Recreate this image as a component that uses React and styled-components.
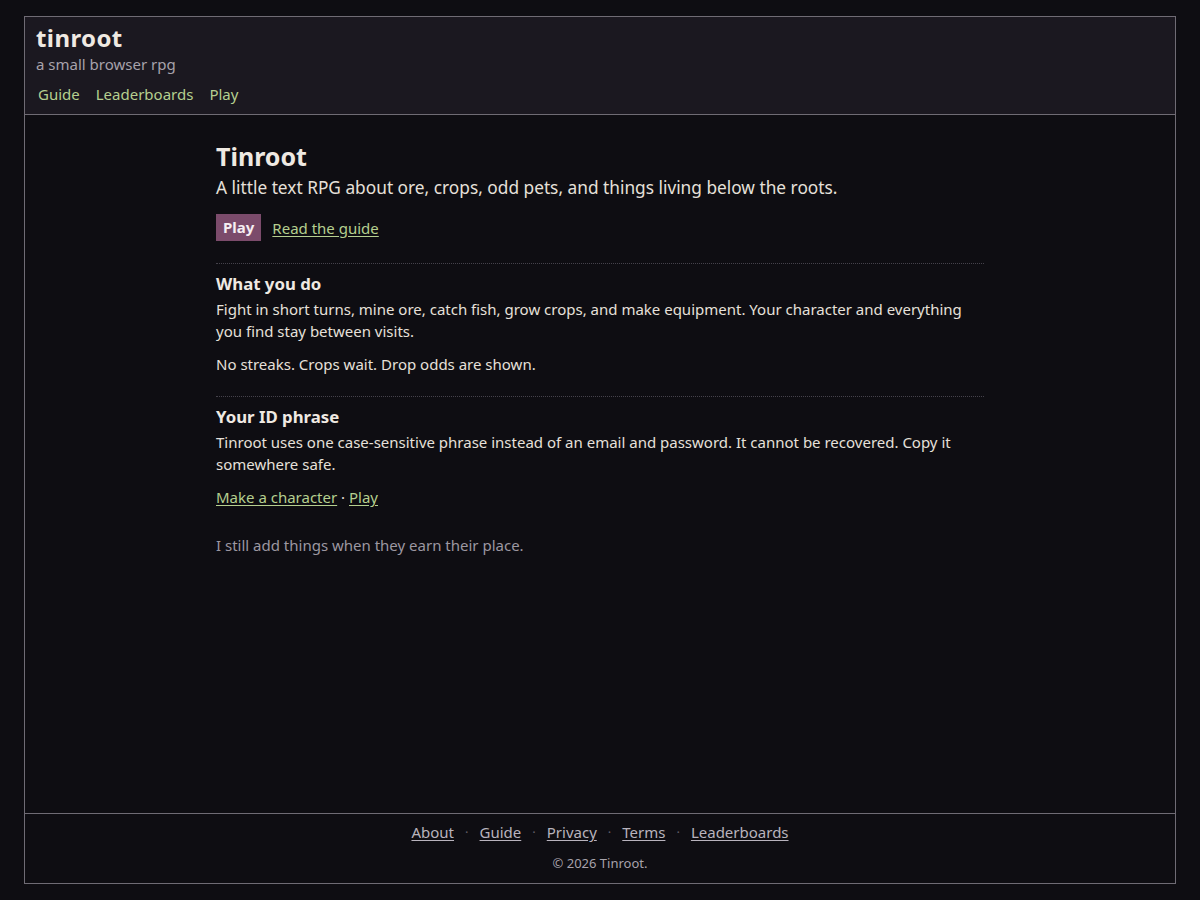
import React from 'react';
import styled, { createGlobalStyle } from 'styled-components';

const GlobalStyle = createGlobalStyle`
  html, body {
    margin: 0;
    padding: 0;
    background: #0e0d12;
    color: #ece6e0;
    font-family: "Noto Sans", "Open Sans", sans-serif;
  }
  body {
    padding: 16px 24px;
  }
  * { box-sizing: border-box; }
`;

const Frame = styled.div`
  display: flex;
  flex-direction: column;
  min-height: calc(100vh - 32px);
  border: 1px solid #6f6b74;
`;

const Header = styled.header`
  background: #1b1820;
  border-bottom: 1px solid #6f6b74;
  padding: 8px 11px 10px;
`;

const SiteTitle = styled.div`
  font-size: 24px;
  font-weight: 700;
  line-height: 26px;
  color: #efe9e2;
  letter-spacing: 0.4px;
`;

const Tagline = styled.div`
  margin-top: 3px;
  font-size: 15px;
  line-height: 20px;
  color: #a7a2ab;
`;

const Nav = styled.nav`
  display: flex;
  gap: 12px;
  margin-top: 10px;
  line-height: 20px;
`;

const NavLink = styled.a`
  padding: 0 2px;
  font-size: 15px;
  color: #b5cf8f;
  text-decoration: none;
`;

const Main = styled.main`
  flex: 1;
  width: 768px;
  margin: 0 auto;
  padding-top: 26px;
`;

const Title = styled.h1`
  margin: 0;
  font-size: 25px;
  line-height: 30px;
  font-weight: 700;
  color: #efe9e2;
`;

const Lead = styled.p`
  margin: 4px 0 0;
  font-size: 17.3px;
  line-height: 26px;
  color: #e6e0da;
`;

const Actions = styled.div`
  display: flex;
  align-items: center;
  gap: 11px;
  margin-top: 13px;
`;

const Button = styled.a`
  display: inline-block;
  padding: 4px 7px;
  font-size: 15px;
  line-height: 19px;
  font-weight: 700;
  background: #7b4b6b;
  color: #f5eef2;
  text-decoration: none;
`;

const TextLink = styled.a`
  font-size: 15px;
  color: #b5cf8f;
  text-decoration: underline;
  text-underline-offset: 2px;
`;

const Section = styled.section`
  margin-top: ${(p) => p.$gap || 22}px;
  padding-top: 8px;
  border-top: 1px dotted #45424b;
`;

const Heading = styled.h2`
  margin: 1px 0 0;
  font-size: 16.8px;
  line-height: 22px;
  font-weight: 700;
  color: #efe9e2;
`;

const Para = styled.p`
  margin: ${(p) => (p.$first ? 3 : 11)}px 0 0;
  font-size: 15px;
  line-height: 22px;
  color: #e6e0da;
`;

const Note = styled(Para)`
  margin-top: 26px;
  color: #9c97a1;
`;

const Footer = styled.footer`
  border-top: 1px solid #6f6b74;
  padding: 8px 0 11px;
  text-align: center;
`;

const FooterLinks = styled.div`
  display: flex;
  justify-content: center;
  align-items: center;
  line-height: 20px;
  font-size: 15px;
`;

const FooterLink = styled.a`
  color: #b8b3bd;
  text-decoration: underline;
  text-underline-offset: 2px;
`;

const Dot = styled.span`
  margin: 0 11px;
  color: #625e68;
  font-size: 13px;
`;

const Copyright = styled.div`
  margin-top: 12px;
  font-size: 13px;
  line-height: 18px;
  color: #a7a2ab;
`;

const footerItems = ['About', 'Guide', 'Privacy', 'Terms', 'Leaderboards'];

export default function App() {
  return (
    <>
      <GlobalStyle />
      <Frame>
        <Header>
          <SiteTitle>tinroot</SiteTitle>
          <Tagline>a small browser rpg</Tagline>
          <Nav>
            <NavLink href="#">Guide</NavLink>
            <NavLink href="#">Leaderboards</NavLink>
            <NavLink href="#">Play</NavLink>
          </Nav>
        </Header>

        <Main>
          <Title>Tinroot</Title>
          <Lead>A little text RPG about ore, crops, odd pets, and things living below the roots.</Lead>
          <Actions>
            <Button href="#">Play</Button>
            <TextLink href="#">Read the guide</TextLink>
          </Actions>

          <Section>
            <Heading>What you do</Heading>
            <Para $first>
              Fight in short turns, mine ore, catch fish, grow crops, and make equipment. Your character and
              everything you find stay between visits.
            </Para>
            <Para>No streaks. Crops wait. Drop odds are shown.</Para>
          </Section>

          <Section $gap={21}>
            <Heading>Your ID phrase</Heading>
            <Para $first>
              Tinroot uses one case-sensitive phrase instead of an email and password. It cannot be recovered. Copy
              it somewhere safe.
            </Para>
            <Para>
              <TextLink href="#">Make a character</TextLink> · <TextLink href="#">Play</TextLink>
            </Para>
            <Note>I still add things when they earn their place.</Note>
          </Section>
        </Main>

        <Footer>
          <FooterLinks>
            {footerItems.map((item, i) => (
              <React.Fragment key={item}>
                {i > 0 && <Dot>·</Dot>}
                <FooterLink href="#">{item}</FooterLink>
              </React.Fragment>
            ))}
          </FooterLinks>
          <Copyright>© 2026 Tinroot.</Copyright>
        </Footer>
      </Frame>
    </>
  );
}
